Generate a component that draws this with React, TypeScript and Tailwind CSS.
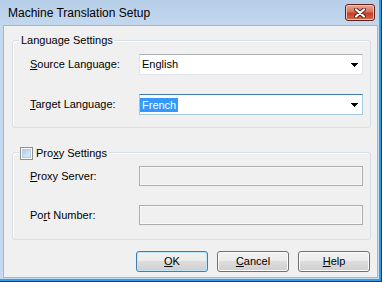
import React from "react";

const Arrow = () => (
  <svg width="7" height="4" viewBox="0 0 7 4" shapeRendering="crispEdges">
    <rect x="0" y="0" width="7" height="1" fill="#000" />
    <rect x="1" y="1" width="5" height="1" fill="#000" />
    <rect x="2" y="2" width="3" height="1" fill="#000" />
    <rect x="3" y="3" width="1" height="1" fill="#000" />
  </svg>
);

function Btn({ children, primary }: { children: React.ReactNode; primary?: boolean }) {
  return (
    <div
      className={
        "w-[72px] h-[21px] rounded-[3px] border flex items-center justify-center text-[11px] text-black bg-[linear-gradient(#f2f2f2_0%,#ebebeb_50%,#dddddd_50%,#cfcfcf_100%)] " +
        (primary
          ? "border-[#3c7fb1] shadow-[inset_0_0_0_1px_#bfe6f8]"
          : "border-[#707070] shadow-[inset_0_0_0_1px_#fbfbfb]")
      }
    >
      {children}
    </div>
  );
}

export default function App() {
  return (
    <div
      className="w-[382px] h-[282px] bg-[#1b3550] pr-px pb-px"
      style={{ fontFamily: '"Liberation Sans", Arial, sans-serif' }}
    >
      <div className="h-full flex flex-col bg-[linear-gradient(#b6cee8,#c6daef_30px,#c6daef)] border-r-2 border-b-2 border-[#2c9fe8] pl-[3px]">
        {/* Title bar */}
        <div className="h-[25px] flex items-center justify-between pl-[5px] pr-[4px]">
          <span className="text-[12px] text-black pt-[1px]">Machine Translation Setup</span>
          <div className="w-[30px] h-[17px] rounded-[3px] border border-[#5e2219] bg-[linear-gradient(#eaa797_0%,#d9735e_45%,#c63d27_55%,#d66a50_100%)] shadow-[inset_0_0_0_1px_#f3c3b6] flex items-center justify-center">
            <svg width="12" height="10" viewBox="0 0 12 10">
              <path d="M2 1.5L10 8.5M10 1.5L2 8.5" stroke="#5a1d14" strokeWidth="4" strokeLinecap="round" />
              <path d="M2 1.5L10 8.5M10 1.5L2 8.5" stroke="#ffffff" strokeWidth="2.2" strokeLinecap="round" />
            </svg>
          </div>
        </div>

        {/* Client */}
        <div className="w-[375px] h-[253px] bg-[#f0f0f0] border border-[#a3b8cd] flex flex-col text-[11px] text-black">
          {/* Language Settings */}
          <div className="relative ml-[8px] mt-[14px] w-[359px] h-[88px] border border-[#d5dfe5] rounded-[3px] shadow-[inset_1px_1px_0_#ffffff] flex flex-col pt-[13px] pl-[17px] gap-[19px]">
            <div className="absolute -top-[7px] left-[6px] px-[2px] bg-[#f0f0f0] leading-[13px]">
              Language Settings
            </div>
            <div className="flex items-center">
              <span className="w-[109px]">
                <u>S</u>ource Language:
              </span>
              <div className="w-[224px] h-[21px] bg-white border border-[#e2e3ea] border-t-[#abadb3] flex items-center justify-between pr-[4px]">
                <span className="px-[2px]">English</span>
                <Arrow />
              </div>
            </div>
            <div className="flex items-center">
              <span className="w-[109px]">
                <u>T</u>arget Language:
              </span>
              <div className="w-[224px] h-[21px] bg-white border border-[#a4c9e3] border-t-[#3d7bad] flex items-center justify-between pr-[4px]">
                <span className="px-[2px] bg-[#3399ff] text-white leading-[14px]">French</span>
                <Arrow />
              </div>
            </div>
          </div>

          {/* Proxy Settings */}
          <div className="relative ml-[8px] mt-[24px] w-[359px] h-[88px] border border-[#d5dfe5] rounded-[3px] shadow-[inset_1px_1px_0_#ffffff] flex flex-col pt-[13px] pl-[17px] gap-[19px]">
            <div className="absolute -top-[7px] left-[6px] pl-[1px] pr-[2px] h-[14px] bg-[#f0f0f0] flex items-center gap-[3px]">
              <div className="w-[13px] h-[13px] border border-[#8e8f8f] bg-white p-[1px]">
                <div className="w-full h-full border border-[#b8cde4] bg-[linear-gradient(135deg,#b3cfee,#dfecf9)]" />
              </div>
              <span className="leading-[13px]">
                Pro<u>x</u>y Settings
              </span>
            </div>
            <div className="flex items-center">
              <span className="w-[109px]">
                <u>P</u>roxy Server:
              </span>
              <div className="w-[224px] h-[20px] bg-[#f0f0f0] border border-[#adadad] shadow-[inset_0_0_0_1px_#f8f8f8]" />
            </div>
            <div className="flex items-center">
              <span className="w-[109px]">
                Po<u>r</u>t Number:
              </span>
              <div className="w-[224px] h-[20px] bg-[#f0f0f0] border border-[#adadad] shadow-[inset_0_0_0_1px_#f8f8f8]" />
            </div>
          </div>

          {/* Buttons */}
          <div className="mt-[11px] flex justify-end gap-[9px] pr-[7px]">
            <Btn primary>
              <span>
                <u>O</u>K
              </span>
            </Btn>
            <Btn>
              <span>
                <u>C</u>ancel
              </span>
            </Btn>
            <Btn>
              <span>
                <u>H</u>elp
              </span>
            </Btn>
          </div>
        </div>
      </div>
    </div>
  );
}
